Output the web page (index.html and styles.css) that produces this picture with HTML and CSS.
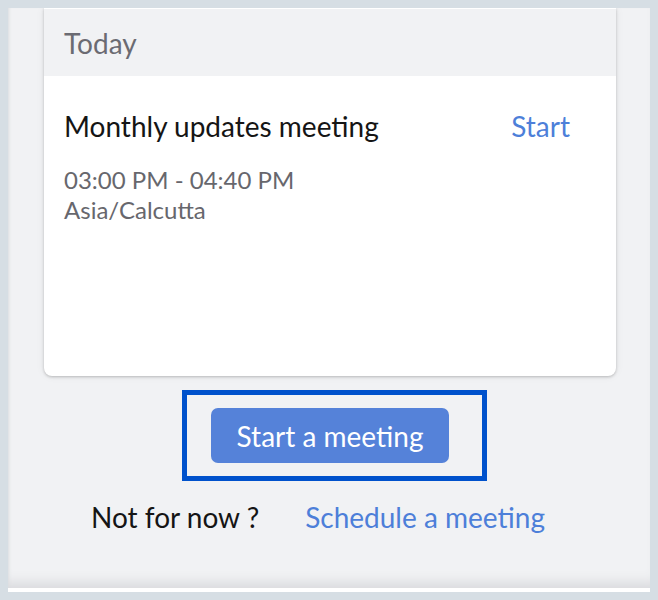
FILE: index.html
```html
<html>
   <head>
      <title>Meetings</title>
      <link rel="stylesheet" href="styles.css">
   </head>
   <body>
      <div class="panel">
         <div class="card">
            <div class="card-head">Today</div>
            <div class="card-body">
               <div class="meeting-row">
                  <span class="meeting-title">Monthly updates meeting</span>
                  <a class="link start-link">Start</a>
               </div>
               <div class="meeting-time">03:00 PM - 04:40 PM</div>
               <div class="meeting-zone">Asia/Calcutta</div>
            </div>
         </div>
         <div class="focus-box">
            <button class="primary">Start a meeting</button>
         </div>
         <div class="later">
            <span>Not for now ?</span>
            <a class="link">Schedule a meeting</a>
         </div>
      </div>
   </body>
</html>
```

FILE: styles.css
```css
body {
   margin: 0;
   background: #d6dee4;
   font-family: Lato, "Open Sans", sans-serif;
}
.panel {
   margin: 8px 8px 0 8px;
   height: 580px;
   background: #f1f2f4;
   border-bottom: 4px solid #fff;
   box-shadow: inset 3px 0 3px -2px #dcdde0, inset 0 -14px 12px -8px #dadbde;
   overflow: hidden;
   display: flex;
   flex-direction: column;
}
.card {
   margin-left: 36px;
   width: 572px;
   background: #fff;
   border-top: 1px solid #fff;
   border-radius: 0 0 8px 8px;
   box-shadow: 0 1px 3px rgba(0, 0, 0, 0.22), 0 0 10px rgba(0, 0, 0, 0.06);
}
.card-head {
   height: 67px;
   box-sizing: border-box;
   padding: 16px 20px 0 20px;
   background: #f1f2f4;
   color: #6b6b72;
   font-size: 28px;
   line-height: 36px;
}
.card-body {
   height: 300px;
   box-sizing: border-box;
   padding: 34px 46px 0 20px;
}
.meeting-row {
   display: flex;
   justify-content: space-between;
   font-size: 28px;
   line-height: 32px;
   color: #151515;
}
.meeting-time, .meeting-zone {
   font-size: 24px;
   line-height: 30px;
   color: #67676d;
}
.meeting-time {
   margin-top: 23px;
}
.link {
   color: #4d7fd9;
}
.focus-box {
   align-self: flex-start;
   margin: 14px 0 0 174px;
   border: 5px solid #0052cc;
   padding: 13px 33px 13px 24px;
}
.primary {
   display: block;
   width: 238px;
   height: 55px;
   border: none;
   border-radius: 7px;
   background: #5582d9;
   color: #fff;
   font-family: inherit;
   font-size: 28px;
}
.later {
   margin: 20px 0 0 83px;
   display: flex;
   gap: 46px;
   font-size: 28px;
   line-height: 32px;
   color: #151515;
}
```
